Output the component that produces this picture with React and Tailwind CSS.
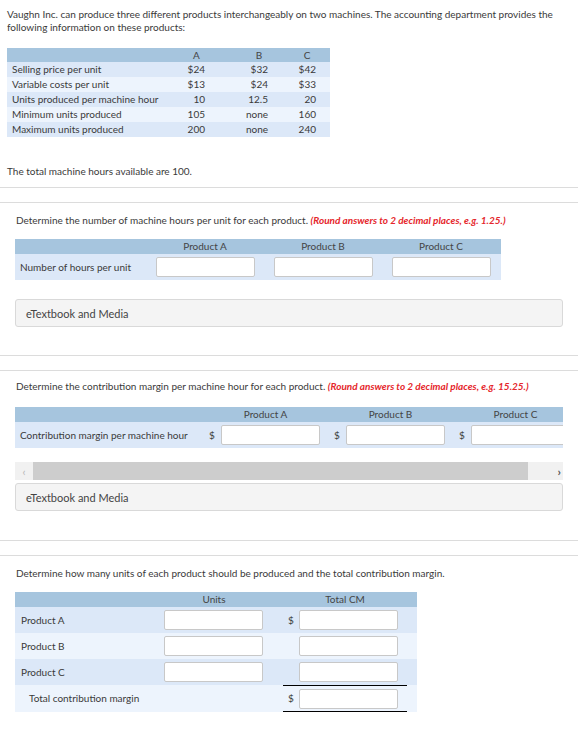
import React from "react";

const topRows = [
  ["Selling price per unit", "$24", "$32", "$42"],
  ["Variable costs per unit", "$13", "$24", "$33"],
  ["Units produced per machine hour", "10", "12.5", "20"],
  ["Minimum units produced", "105", "none", "160"],
  ["Maximum units produced", "200", "none", "240"],
];

function Box() {
  return (
    <input
      type="text"
      className="h-[20px] w-[99px] rounded-[2px] border border-[#c8c8c8] bg-white outline-none"
    />
  );
}

function Media() {
  return (
    <div className="mx-[15px] flex h-[28px] items-center rounded-[3px] border border-[#d9d9d9] bg-[#f4f4f4] pl-[10px] text-[11px] text-[#444]">
      eTextbook and Media
    </div>
  );
}

function Red({ children }) {
  return <span className="font-bold italic text-[#e5262b]">{children}</span>;
}

export default function App() {
  return (
    <div className="min-h-screen w-[578px] bg-white font-[Lato,sans-serif] text-[10px] leading-[13px] text-[#3a3a3a]">
      {/* Problem statement */}
      <div className="border-b border-[#dcdcdc] px-[7px] pt-[8px] pb-[9px]">
        <p>
          Vaughn Inc. can produce three different products interchangeably on two machines. The
          accounting department provides the following information on these products:
        </p>

        <div className="mt-[14px] w-[323px]">
          <div className="grid h-[14px] grid-cols-[173px_33px_29px_34px_14px_34px_6px] items-center bg-[#a6c5de] text-[#444]">
            <span />
            <span className="text-center">A</span>
            <span />
            <span className="text-center">B</span>
            <span />
            <span className="text-center">C</span>
            <span />
          </div>
          {topRows.map((r, i) => (
            <div
              key={r[0]}
              className={`grid h-[15px] grid-cols-[173px_33px_29px_34px_14px_34px_6px] items-center ${
                i % 2 === 0 ? "bg-[#dce8f8]" : "bg-[#edf4fd]"
              }`}
            >
              <span className="pl-[5px] whitespace-nowrap">{r[0]}</span>
              <span className="pr-[8px] text-right">{r[1]}</span>
              <span />
              <span className="pr-[8px] text-right whitespace-nowrap">{r[2]}</span>
              <span />
              <span className="pr-[8px] text-right">{r[3]}</span>
              <span />
            </div>
          ))}
        </div>

        <p className="mt-[28px]">The total machine hours available are 100.</p>
      </div>

      {/* Part 1 */}
      <div className="mt-[14px] border-y border-[#dcdcdc] pt-[11px] pb-[28px]">
        <p className="px-[16px]">
          Determine the number of machine hours per unit for each product.{" "}
          <Red>(Round answers to 2 decimal places, e.g. 1.25.)</Red>
        </p>
        <div className="mx-[15px] mt-[12px] w-[486px]">
          <div className="grid h-[15px] grid-cols-[131px_118px_118px_118px] items-center bg-[#a6c5de] text-[#444]">
            <span />
            <span className="text-center">Product A</span>
            <span className="text-center">Product B</span>
            <span className="text-center">Product C</span>
          </div>
          <div className="grid h-[26px] grid-cols-[131px_118px_118px_118px] items-center bg-[#dce8f8]">
            <span className="pl-[5px]">Number of hours per unit</span>
            <div className="pl-[10px]">
              <Box />
            </div>
            <div className="pl-[10px]">
              <Box />
            </div>
            <div className="pl-[10px]">
              <Box />
            </div>
          </div>
        </div>
        <div className="mt-[19px]">
          <Media />
        </div>
      </div>

      {/* Part 2 */}
      <div className="mt-[14px] border-y border-[#dcdcdc] pt-[9px] pb-[29px]">
        <p className="px-[16px]">
          Determine the contribution margin per machine hour for each product.{" "}
          <Red>(Round answers to 2 decimal places, e.g. 15.25.)</Red>
        </p>
        <div className="mx-[15px] mt-[14px] overflow-hidden">
          <div className="w-[575px]">
            <div className="grid h-[15px] grid-cols-[185px_125px_125px_125px] items-center bg-[#a6c5de] text-[#444]">
              <span />
              <span className="pl-[6px] text-center">Product A</span>
              <span className="pl-[6px] text-center">Product B</span>
              <span className="pl-[6px] text-center">Product C</span>
            </div>
            <div className="grid h-[26px] grid-cols-[185px_125px_125px_125px] items-center bg-[#dce8f8]">
              <span className="pl-[5px] whitespace-nowrap">Contribution margin per machine hour</span>
              {["a", "b", "c"].map((k) => (
                <div key={k} className="flex items-center">
                  <span className="w-[21px] pl-[9px]">$</span>
                  <Box />
                </div>
              ))}
            </div>
          </div>
        </div>
        <div className="mx-[15px] mt-[14px] flex h-[18px] items-center bg-[#f1f1f1]">
          <span className="flex w-[18px] justify-center text-[11px] text-[#b5b5b5]">‹</span>
          <div className="h-full w-[495px] bg-[#cdcdcd]" />
          <span className="flex flex-1 justify-end pr-[2px] text-[12px] font-bold text-[#555]">›</span>
        </div>
        <div className="mt-[3px]">
          <Media />
        </div>
      </div>

      {/* Part 3 */}
      <div className="mt-[14px] border-t border-[#dcdcdc] pt-[11px] pb-[19px]">
        <p className="px-[16px]">
          Determine how many units of each product should be produced and the total contribution
          margin.
        </p>
        <div className="ml-[15px] mt-[12px] w-[402px]">
          <div className="grid h-[15px] grid-cols-[140px_118px_10px_124px_10px] items-center bg-[#a6c5de] text-[#444]">
            <span />
            <span className="text-center">Units</span>
            <span />
            <span className="text-center">Total CM</span>
            <span />
          </div>
          {[
            ["Product A", true],
            ["Product B", false],
            ["Product C", false],
          ].map(([name, dollar], i) => (
            <div
              key={name}
              className={`grid h-[26px] grid-cols-[140px_118px_10px_124px_10px] items-center ${
                i % 2 === 0 ? "bg-[#dce8f8]" : "bg-[#edf4fd]"
              }`}
            >
              <span className="pl-[6px]">{name}</span>
              <div className="pl-[9px]">
                <Box />
              </div>
              <span />
              <div className="flex items-center">
                <span className="w-[16px] pl-[5px]">{dollar ? "$" : ""}</span>
                <Box />
              </div>
              <span />
            </div>
          ))}
          <div className="grid h-[27px] grid-cols-[140px_118px_10px_124px_10px] items-center bg-[#edf4fd]">
            <span className="pl-[14px] whitespace-nowrap">Total contribution margin</span>
            <span />
            <span />
            <div className="flex h-full items-center border-y border-black">
              <span className="w-[16px] pl-[5px]">$</span>
              <Box />
            </div>
            <span />
          </div>
        </div>
      </div>
    </div>
  );
}
